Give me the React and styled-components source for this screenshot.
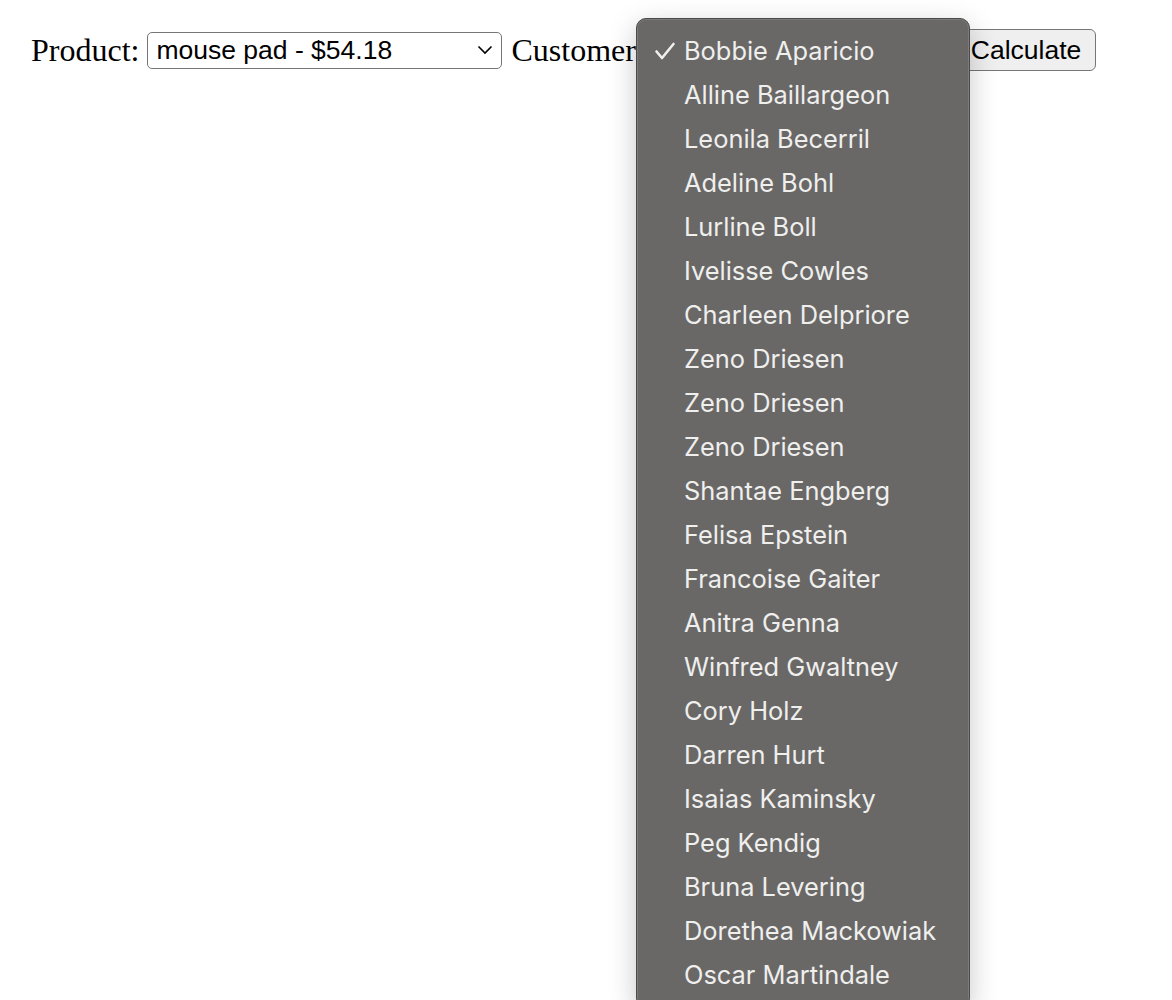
import React, { useState } from 'react';
import styled, { createGlobalStyle } from 'styled-components';

const GlobalStyle = createGlobalStyle`
  html, body {
    margin: 0;
    padding: 0;
    background: #ffffff;
  }
  body {
    font-family: 'Liberation Serif', 'Times New Roman', serif;
  }
`;

const Page = styled.div`
  position: relative;
  width: 1172px;
  height: 1000px;
  overflow: hidden;
`;

const Form = styled.form`
  display: flex;
  align-items: center;
  padding: 29px 0 0 31px;
  font-size: 32px;
  color: #000;
`;

const Label = styled.label`
  margin-right: 8px;
`;

const Select = styled.select`
  box-sizing: border-box;
  width: ${p => p.$width}px;
  height: 37px;
  margin-right: 9px;
  padding: 0 8px;
  font-family: 'Liberation Sans', Arial, sans-serif;
  font-size: 26.5px;
  color: #000;
  background: #fff;
  border: 1.5px solid #767676;
  border-radius: 5px;
  appearance: none;
  background-image: url("data:image/svg+xml;utf8,<svg xmlns='http://www.w3.org/2000/svg' width='16' height='10' viewBox='0 0 16 10'><path d='M1.5 1.5 L8 8 L14.5 1.5' fill='none' stroke='black' stroke-width='1.6'/></svg>");
  background-repeat: no-repeat;
  background-position: right 8px center;
`;

const Button = styled.button`
  box-sizing: border-box;
  height: 42px;
  padding: 0 14px;
  font-family: 'Liberation Sans', Arial, sans-serif;
  font-size: 26.5px;
  color: #000;
  background: #efefef;
  border: 1.5px solid #767676;
  border-radius: 6px;
`;

const Menu = styled.ul`
  position: absolute;
  left: 636px;
  top: 18px;
  width: 334px;
  box-sizing: border-box;
  margin: 0;
  padding: 10px 0;
  list-style: none;
  background: #696866;
  border: 1px solid #4b4a49;
  border-radius: 10px;
  box-shadow: inset 0 0 0 1px #7d7c7b, 0 8px 28px rgba(0, 0, 0, 0.22);
  font-family: 'Inter', 'Noto Sans', sans-serif;
  font-size: 25.4px;
  color: #efefee;
`;

const MenuItem = styled.li`
  position: relative;
  height: 44px;
  line-height: 44px;
  padding-left: 47px;
  white-space: nowrap;
`;

const Check = styled.svg`
  position: absolute;
  left: 17px;
  top: 13px;
`;

const CheckMark = () => (
  <Check width="22" height="20" viewBox="0 0 22 20">
    <path d="M2.5 9.5 L8 16 L19.5 2" fill="none" stroke="#efefee" strokeWidth="2.6" strokeLinecap="round" strokeLinejoin="round" />
  </Check>
);

const products = ['mouse pad - $54.18'];

const customers = [
  'Bobbie Aparicio',
  'Alline Baillargeon',
  'Leonila Becerril',
  'Adeline Bohl',
  'Lurline Boll',
  'Ivelisse Cowles',
  'Charleen Delpriore',
  'Zeno Driesen',
  'Zeno Driesen',
  'Zeno Driesen',
  'Shantae Engberg',
  'Felisa Epstein',
  'Francoise Gaiter',
  'Anitra Genna',
  'Winfred Gwaltney',
  'Cory Holz',
  'Darren Hurt',
  'Isaias Kaminsky',
  'Peg Kendig',
  'Bruna Levering',
  'Dorethea Mackowiak',
  'Oscar Martindale',
];

const App = () => {
  const [product, setProduct] = useState(products[0]);
  const [customer, setCustomer] = useState(0);

  return (
    <Page>
      <GlobalStyle />
      <Form onSubmit={e => e.preventDefault()}>
        <Label>Product:</Label>
        <Select $width={355} value={product} onChange={e => setProduct(e.target.value)}>
          {products.map(p => (
            <option key={p} value={p}>{p}</option>
          ))}
        </Select>
        <Label>Customer:</Label>
        <Select $width={294} value={customer} onChange={e => setCustomer(Number(e.target.value))}>
          {customers.map((c, i) => (
            <option key={i} value={i}>{c}</option>
          ))}
        </Select>
        <Button type="submit">Calculate</Button>
      </Form>
      <Menu>
        {customers.map((c, i) => (
          <MenuItem key={i} onClick={() => setCustomer(i)}>
            {i === customer && <CheckMark />}
            {c}
          </MenuItem>
        ))}
      </Menu>
    </Page>
  );
};

export default App;
